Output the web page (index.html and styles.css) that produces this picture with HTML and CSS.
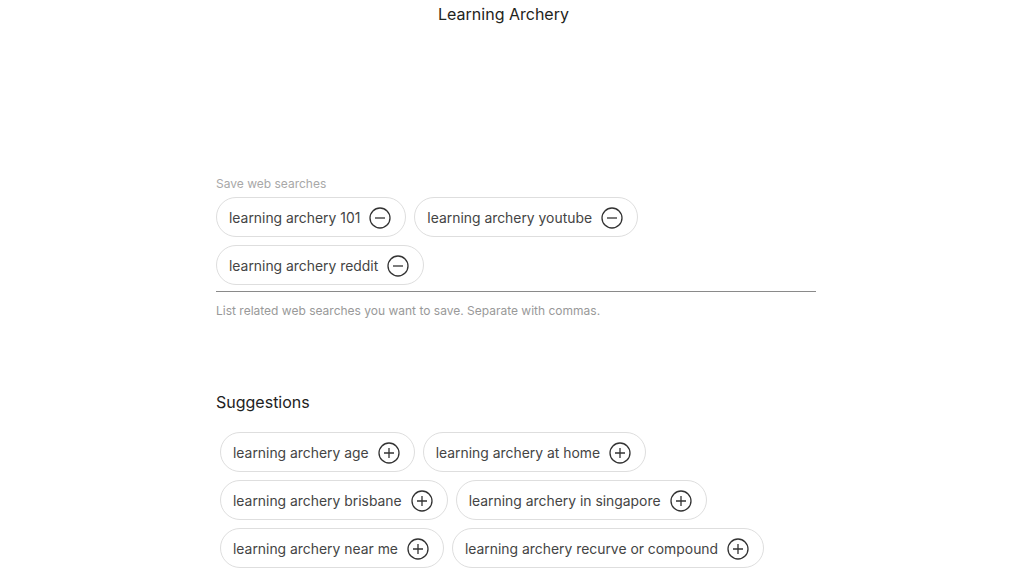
FILE: index.html
```html
<!DOCTYPE html>
<html>
<head>
<meta charset="utf-8">
<link rel="stylesheet" href="styles.css">
</head>
<body>
<header class="top">Learning Archery</header>
<main class="content">
  <section class="saved">
    <div class="label">Save web searches</div>
    <div class="chips">
      <span class="chip">learning archery 101 <svg class="ic" viewBox="0 0 22 22"><circle cx="11" cy="11" r="10" /><path d="M6 11h10"/></svg></span>
      <span class="chip">learning archery youtube <svg class="ic" viewBox="0 0 22 22"><circle cx="11" cy="11" r="10" /><path d="M6 11h10"/></svg></span>
      <span class="chip">learning archery reddit <svg class="ic" viewBox="0 0 22 22"><circle cx="11" cy="11" r="10" /><path d="M6 11h10"/></svg></span>
    </div>
    <div class="rule"></div>
    <div class="help">List related web searches you want to save. Separate with commas.</div>
  </section>
  <section class="sugg">
    <h2 class="heading">Suggestions</h2>
    <div class="chips inset">
      <span class="chip">learning archery age <svg class="ic" viewBox="0 0 22 22"><circle cx="11" cy="11" r="10" /><path d="M6 11h10M11 6v10"/></svg></span>
      <span class="chip">learning archery at home <svg class="ic" viewBox="0 0 22 22"><circle cx="11" cy="11" r="10" /><path d="M6 11h10M11 6v10"/></svg></span>
      <span class="chip">learning archery brisbane <svg class="ic" viewBox="0 0 22 22"><circle cx="11" cy="11" r="10" /><path d="M6 11h10M11 6v10"/></svg></span>
      <span class="chip">learning archery in singapore <svg class="ic" viewBox="0 0 22 22"><circle cx="11" cy="11" r="10" /><path d="M6 11h10M11 6v10"/></svg></span>
      <span class="chip">learning archery near me <svg class="ic" viewBox="0 0 22 22"><circle cx="11" cy="11" r="10" /><path d="M6 11h10M11 6v10"/></svg></span>
      <span class="chip">learning archery recurve or compound <svg class="ic" viewBox="0 0 22 22"><circle cx="11" cy="11" r="10" /><path d="M6 11h10M11 6v10"/></svg></span>
    </div>
  </section>
</main>
</body>
</html>
```
FILE: styles.css
```css
html, body { margin: 0; padding: 0; background: #fff; }
body { font-family: Inter, "Noto Sans", sans-serif; color: #222; width: 1032px; height: 581px; overflow: hidden; }
.top { width: 1007px; text-align: center; font-size: 16px; line-height: 20px; padding-top: 4px; color: #1f2420; }
.content { width: 600px; margin-left: 216px; padding-top: 152px; }
.label { font-size: 12px; line-height: 16px; color: #a8a8a8; margin-bottom: 5px; }
.chips { display: flex; flex-wrap: wrap; gap: 8px; width: 600px; }
.chips.inset { padding-left: 4px; width: 596px; }
.chip { display: inline-flex; align-items: center; gap: 9px; height: 40px; box-sizing: border-box; padding: 1px 14px 0 12px; border: 1px solid #dedede; border-radius: 20px; font-size: 13.9px; color: #444; white-space: nowrap; }
.ic { width: 22px; height: 22px; fill: none; stroke: #333; stroke-width: 1.3; }
.rule { height: 1px; background: #8a8a8a; margin-top: 6px; }
.help { font-size: 12px; line-height: 16px; color: #999; margin-top: 11px; }
.sugg { margin-top: 73px; }
.heading { font-size: 16px; font-weight: 400; line-height: 20px; margin: 0 0 20px; color: #222; }
```
